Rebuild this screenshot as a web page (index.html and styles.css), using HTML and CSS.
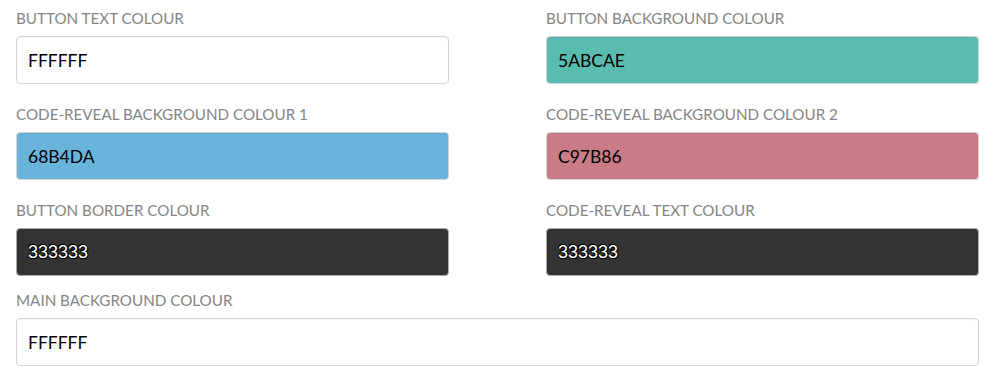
FILE: index.html
```html
<!DOCTYPE html>
<html lang="en">
<head>
    <meta charset="UTF-8">
    <title>Colours</title>
    <link rel="stylesheet" href="styles.css">
</head>
<body>
    <form class="colour-form">
        <div class="field">
            <label>Button Text Colour</label>
            <input type="text" class="colour-input" value="FFFFFF">
        </div>
        <div class="field">
            <label>Button Background Colour</label>
            <input type="text" class="colour-input teal" value="5ABCAE">
        </div>
        <div class="field">
            <label>Code-Reveal Background Colour 1</label>
            <input type="text" class="colour-input blue" value="68B4DA">
        </div>
        <div class="field">
            <label>Code-Reveal Background Colour 2</label>
            <input type="text" class="colour-input rose" value="C97B86">
        </div>
        <div class="field">
            <label>Button Border Colour</label>
            <input type="text" class="colour-input dark" value="333333">
        </div>
        <div class="field">
            <label>Code-Reveal Text Colour</label>
            <input type="text" class="colour-input dark" value="333333">
        </div>
        <div class="field wide">
            <label>Main Background Colour</label>
            <input type="text" class="colour-input" value="FFFFFF">
        </div>
    </form>
</body>
</html>
```

FILE: styles.css
```css
body {
    margin: 0;
    background: #fff;
    font-family: Lato, "Open Sans", sans-serif;
}
.colour-form {
    display: grid;
    grid-template-columns: 433px 433px;
    column-gap: 97px;
    row-gap: 21px;
    padding: 9px 21px 0 16px;
}
.field {
    display: flex;
    flex-direction: column;
}
.field.wide {
    grid-column: 1 / 3;
    margin-top: -6px;
}
.field label {
    font-size: 15.2px;
    line-height: 18px;
    color: #858585;
    text-transform: uppercase;
    margin-bottom: 9px;
}
.colour-input {
    box-sizing: border-box;
    height: 48px;
    padding: 0 11px;
    border: 1px solid #d6d6d6;
    border-radius: 4px;
    background: #fff;
    box-shadow: inset 0 1px 1px rgba(0, 0, 0, 0.05);
    font-family: Lato, "Open Sans", sans-serif;
    font-size: 17.5px;
    color: #000;
    outline: none;
}
.colour-input.teal {
    background: #5abcae;
}
.colour-input.blue {
    background: #68b4da;
}
.colour-input.rose {
    background: #c97b86;
}
.colour-input.dark {
    background: #333;
    border-color: #aaa;
    color: #fff;
    font-family: "Liberation Sans", Arial, sans-serif;
    font-size: 18px;
    text-shadow: -1px 0 #000, 1px 0 #000, 0 -1px #000, 0 1px #000, 1px 1px #000, -1px -1px #000;
}
```
